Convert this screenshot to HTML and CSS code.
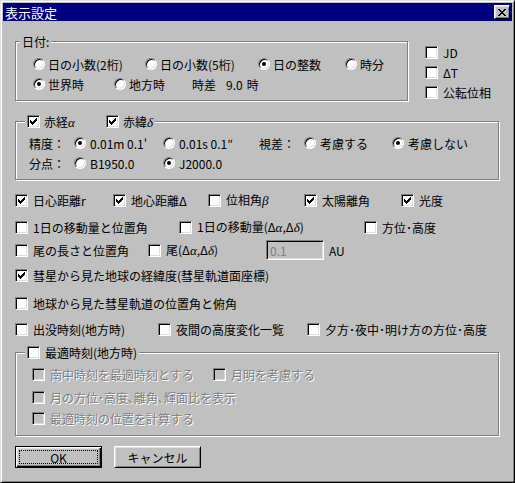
FILE: index.html
```html
<!DOCTYPE html>
<html lang="ja">
<head>
    <meta charset="UTF-8">
    <title>表示設定</title>
    <link rel="stylesheet" href="styles.css">
</head>
<body>
    <div class="window">
        <div class="titlebar">
            <span class="title">表示設定</span>
            <span class="close">
                <svg width="8" height="7" viewBox="0 0 8 7"><path d="M0 0h2v1H0zM6 0h2v1H6zM1 1h2v1H1zM5 1h2v1H5zM2 2h4v1H2zM3 3h2v1H3zM2 4h4v1H2zM1 5h2v1H1zM5 5h2v1H5zM0 6h2v1H0zM6 6h2v1H6z"/></svg>
            </span>
        </div>

        <div class="content">
            <div class="top">
                <fieldset class="group g-date">
                    <legend>日付:</legend>
                    <div class="row first">
                        <label class="opt w112"><span class="radio"></span>日の小数(2桁)</label>
                        <label class="opt w113"><span class="radio"></span>日の小数(5桁)</label>
                        <label class="opt w87"><span class="radio on"></span>日の整数</label>
                        <label class="opt"><span class="radio"></span>時分</label>
                    </div>
                    <div class="row">
                        <label class="opt w81"><span class="radio on"></span>世界時</label>
                        <label class="opt w78"><span class="radio"></span>地方時</label>
                        <span>時差</span><span class="lag-val">9.0</span><span class="lag-unit">時</span>
                    </div>
                </fieldset>

                <div class="side">
                    <label class="opt"><span class="check"></span>JD</label>
                    <label class="opt"><span class="check"></span>ΔT</label>
                    <label class="opt"><span class="check"></span>公転位相</label>
                </div>
            </div>

            <fieldset class="group g-coord">
                <legend class="legend-checks">
                    <label class="opt w79"><span class="check on"><svg class="tick" width="7" height="7" viewBox="0 0 7 7"><path d="M0 2h1v3H0zM1 3h1v3H1zM2 4h1v3H2zM3 3h1v3H3zM4 2h1v3H4zM5 1h1v3H5zM6 0h1v3H6z"/></svg></span><span>赤経<i class="greek">α</i></span></label>
                    <label class="opt"><span class="check on"><svg class="tick" width="7" height="7" viewBox="0 0 7 7"><path d="M0 2h1v3H0zM1 3h1v3H1zM2 4h1v3H2zM3 3h1v3H3zM4 2h1v3H4zM5 1h1v3H5zM6 0h1v3H6z"/></svg></span><span>赤緯<i class="greek">δ</i></span></label>
                </legend>
                <div class="row first">
                    <span class="field-label">精度：</span>
                    <label class="opt w89"><span class="radio on"></span>0.01m 0.1'</label>
                    <label class="opt w96"><span class="radio"></span>0.01s 0.1″</label>
                    <span class="field-label">視差：</span>
                    <label class="opt w88"><span class="radio"></span>考慮する</label>
                    <label class="opt"><span class="radio on"></span>考慮しない</label>
                </div>
                <div class="row">
                    <span class="field-label">分点：</span>
                    <label class="opt w89"><span class="radio"></span>B1950.0</label>
                    <label class="opt"><span class="radio on"></span>J2000.0</label>
                </div>
            </fieldset>

            <div class="row main r-a">
                <label class="opt w98"><span class="check on"><svg class="tick" width="7" height="7" viewBox="0 0 7 7"><path d="M0 2h1v3H0zM1 3h1v3H1zM2 4h1v3H2zM3 3h1v3H3zM4 2h1v3H4zM5 1h1v3H5zM6 0h1v3H6z"/></svg></span>日心距離r</label>
                <label class="opt w95"><span class="check on"><svg class="tick" width="7" height="7" viewBox="0 0 7 7"><path d="M0 2h1v3H0zM1 3h1v3H1zM2 4h1v3H2zM3 3h1v3H3zM4 2h1v3H4zM5 1h1v3H5zM6 0h1v3H6z"/></svg></span>地心距離Δ</label>
                <label class="opt w96"><span class="check"></span><span>位相角<i class="greek">β</i></span></label>
                <label class="opt w97"><span class="check on"><svg class="tick" width="7" height="7" viewBox="0 0 7 7"><path d="M0 2h1v3H0zM1 3h1v3H1zM2 4h1v3H2zM3 3h1v3H3zM4 2h1v3H4zM5 1h1v3H5zM6 0h1v3H6z"/></svg></span>太陽離角</label>
                <label class="opt"><span class="check on"><svg class="tick" width="7" height="7" viewBox="0 0 7 7"><path d="M0 2h1v3H0zM1 3h1v3H1zM2 4h1v3H2zM3 3h1v3H3zM4 2h1v3H4zM5 1h1v3H5zM6 0h1v3H6z"/></svg></span>光度</label>
            </div>
            <div class="row main r-b">
                <label class="opt w164"><span class="check"></span>1日の移動量と位置角</label>
                <label class="opt w185"><span class="check"></span><span>1日の移動量(Δ<i class="greek">α</i>,Δ<i class="greek">δ</i>)</span></label>
                <label class="opt"><span class="check"></span>方位･高度</label>
            </div>
            <div class="row main r-c">
                <label class="opt w133"><span class="check"></span>尾の長さと位置角</label>
                <label class="opt w118"><span class="check"></span><span>尾(Δ<i class="greek">α</i>,Δ<i class="greek">δ</i>)</span></label>
                <input class="field" type="text" value="0.1" disabled>
                <span class="unit">AU</span>
            </div>
            <div class="row main r-d">
                <label class="opt"><span class="check on"><svg class="tick" width="7" height="7" viewBox="0 0 7 7"><path d="M0 2h1v3H0zM1 3h1v3H1zM2 4h1v3H2zM3 3h1v3H3zM4 2h1v3H4zM5 1h1v3H5zM6 0h1v3H6z"/></svg></span>彗星から見た地球の経緯度(彗星軌道面座標)</label>
            </div>
            <div class="row main r-e">
                <label class="opt"><span class="check"></span>地球から見た彗星軌道の位置角と俯角</label>
            </div>
            <div class="row main r-f">
                <label class="opt w143"><span class="check"></span>出没時刻(地方時)</label>
                <label class="opt w149"><span class="check"></span>夜間の高度変化一覧</label>
                <label class="opt"><span class="check"></span>夕方･夜中･明け方の方位･高度</label>
            </div>

            <fieldset class="group g-best">
                <legend class="legend-checks">
                    <label class="opt"><span class="check"></span>最適時刻(地方時)</label>
                </legend>
                <div class="row first">
                    <label class="opt off w181"><span class="check"></span>南中時刻を最適時刻とする</label>
                    <label class="opt off"><span class="check"></span>月明を考慮する</label>
                </div>
                <div class="row second">
                    <label class="opt off"><span class="check"></span>月の方位･高度､離角､輝面比を表示</label>
                </div>
                <div class="row third">
                    <label class="opt off"><span class="check"></span>最適時刻の位置を計算する</label>
                </div>
            </fieldset>

            <div class="buttons">
                <button class="btn default"><span class="focus">OK</span></button>
                <button class="btn">キャンセル</button>
            </div>
        </div>
    </div>
</body>
</html>
```

FILE: styles.css
```css
body {
    margin: 0;
    background: #c0c0c0;
    font-family: "Noto Sans CJK JP", sans-serif;
    font-size: 12px;
    color: #000000;
}

.window {
    width: 515px;
    height: 483px;
    box-sizing: border-box;
    padding: 2px;
    background: #c0c0c0;
    border: 1px solid;
    border-color: #dfdfdf #000000 #000000 #dfdfdf;
    box-shadow: inset 1px 1px #ffffff, inset -1px -1px #808080;
}

.titlebar {
    height: 18px;
    background: #000080;
    color: #ffffff;
    display: flex;
    align-items: center;
    justify-content: space-between;
    padding-left: 2px;
}

.title {
    font-size: 13px;
}

.close {
    width: 16px;
    height: 14px;
    box-sizing: border-box;
    margin-right: 2px;
    background: #c0c0c0;
    border: 1px solid;
    border-color: #ffffff #000000 #000000 #ffffff;
    box-shadow: inset 1px 1px #dfdfdf, inset -1px -1px #808080;
    display: flex;
    align-items: center;
    justify-content: center;
}

.content {
    padding-left: 12px;
}

/* etched group frame */
.group {
    margin: 0;
    padding: 0;
    min-width: 0;
    box-sizing: border-box;
    border: 1px solid #808080;
    box-shadow: inset 1px 1px #ffffff, 1px 1px #ffffff;
}

.group legend {
    margin-left: 4px;
    padding: 0 2px;
    height: 15px;
    line-height: 15px;
    background: #c0c0c0;
}

.group .legend-checks {
    margin-left: 9px;
    display: flex;
    align-items: center;
}

.row {
    display: flex;
    align-items: center;
    height: 20px;
    white-space: nowrap;
}

.opt {
    display: flex;
    align-items: center;
    gap: 5px;
    flex: none;
}

.radio {
    width: 12px;
    height: 12px;
    box-sizing: border-box;
    border-radius: 50%;
    background: #ffffff;
    border: 1px solid;
    border-color: #808080 #ffffff #ffffff #808080;
    box-shadow: inset 1px 1px #000000, inset -1px -1px #dfdfdf;
    display: flex;
    align-items: center;
    justify-content: center;
    flex: none;
}

.radio.on::after {
    content: "";
    width: 4px;
    height: 4px;
    border-radius: 50%;
    background: #000000;
}

.check {
    width: 13px;
    height: 13px;
    box-sizing: border-box;
    background: #ffffff;
    border: 1px solid;
    border-color: #808080 #ffffff #ffffff #808080;
    box-shadow: inset 1px 1px #000000, inset -1px -1px #dfdfdf;
    display: flex;
    align-items: center;
    justify-content: center;
    flex: none;
}

.greek {
    font-family: "Liberation Serif", serif;
    font-style: italic;
    font-size: 13px;
}

/* top block */
.top {
    display: flex;
    align-items: flex-start;
}

.g-date {
    width: 393px;
    margin-top: 13px;
    padding-bottom: 6px;
}

.g-date .row {
    padding-left: 17px;
}

.g-date .opt {
    gap: 3px;
}

.g-date .first {
    margin-top: 5px;
}

.lag-val {
    margin-left: 10px;
}

.lag-unit {
    margin-left: 4px;
}

.side {
    margin-left: 17px;
    margin-top: 21px;
}

.side .opt {
    height: 20px;
}

/* coordinates group */
.g-coord {
    width: 484px;
    margin-top: 12px;
    padding-bottom: 6px;
}

.g-coord .row {
    padding-left: 13px;
}

.g-coord .opt {
    gap: 4px;
}

.g-coord .first {
    margin-top: 4px;
}

.field-label {
    width: 45px;
    flex: none;
}

.w78 { width: 78px; }
.w79 { width: 79px; }
.w81 { width: 81px; }
.w87 { width: 87px; }
.w88 { width: 88px; }
.w89 { width: 89px; }
.w95 { width: 95px; }
.w96 { width: 96px; }
.w97 { width: 97px; }
.w98 { width: 98px; }
.w112 { width: 112px; }
.w113 { width: 113px; }
.w118 { width: 118px; }
.w133 { width: 133px; }
.w143 { width: 143px; }
.w149 { width: 149px; }
.w164 { width: 164px; }
.w181 { width: 181px; }
.w185 { width: 185px; }

/* loose rows */
.r-a { margin-top: 10px; }
.r-b { margin-top: 7px; }
.r-c { margin-top: 3px; }
.r-d { margin-top: 5px; }
.r-e { margin-top: 8px; }
.r-f { margin-top: 6px; }

.field {
    width: 58px;
    height: 20px;
    box-sizing: border-box;
    margin: 0;
    padding: 0 0 0 3px;
    font: inherit;
    color: #808080;
    background: #c0c0c0;
    border: 1px solid;
    border-color: #808080 #ffffff #ffffff #808080;
    box-shadow: inset 1px 1px #000000, inset -1px -1px #dfdfdf;
}

.unit {
    margin-left: 5px;
}

/* best time group */
.g-best {
    width: 484px;
    margin-top: 6px;
    padding-bottom: 7px;
}

.g-best .row {
    padding-left: 16px;
}

.g-best .first { margin-top: 4px; }
.g-best .second { margin-top: 3px; }
.g-best .third { margin-top: 1px; }

.opt.off {
    color: #808080;
    text-shadow: 1px 1px #ffffff;
}

.opt.off .check {
    background: #c0c0c0;
}

/* buttons */
.buttons {
    display: flex;
    gap: 12px;
    margin-top: 10px;
}

.btn {
    width: 87px;
    height: 22px;
    box-sizing: border-box;
    margin: 0;
    padding: 0;
    font: inherit;
    color: #000000;
    background: #c0c0c0;
    border: 1px solid;
    border-color: #ffffff #000000 #000000 #ffffff;
    box-shadow: inset 1px 1px #dfdfdf, inset -1px -1px #808080;
}

.btn.default {
    border-color: #000000;
    box-shadow: inset 1px 1px #ffffff, inset -1px -1px #000000, inset -2px -2px #808080, inset 2px 2px #dfdfdf;
    padding: 3px;
}

.focus {
    display: flex;
    align-items: center;
    justify-content: center;
    height: 100%;
    box-sizing: border-box;
    border: 1px dotted #000000;
}
```
